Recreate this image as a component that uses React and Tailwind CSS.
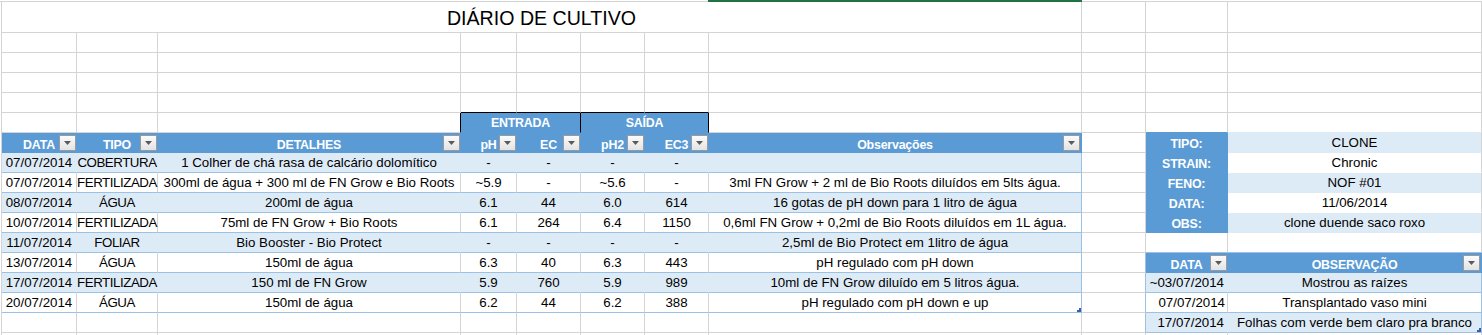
import React from "react";

const GRID =
  "grid grid-cols-[75px_81px_303px_56px_64px_64px_64px_373px_64px_82px_254px] grid-rows-[31px_repeat(16,20px)]";

const EMPTY = "border-r border-b border-[#d4d4d4] bg-white";
const TXT = "flex items-center justify-center pt-[1px] whitespace-nowrap text-black";
const HEAD =
  "relative flex items-end justify-center pb-[1px] whitespace-nowrap bg-[#5b9bd5] text-white font-bold text-[12.4px] tracking-[-0.2px] border-r border-b border-[#5b9bd5]";

function Arrow() {
  return (
    <svg width="7" height="4" viewBox="0 0 7 4">
      <path d="M0 0H7L3.5 4Z" fill="#5a5a5a" />
    </svg>
  );
}

function Filter({ inset }) {
  return (
    <span
      className={`absolute ${inset ? "right-px" : "right-0"} top-[2px] w-[17px] h-[16px] border border-[#9a9a9a] bg-linear-to-b from-[#fbfbfb] to-[#e3e3e3] flex items-center justify-center`}
    >
      <Arrow />
    </span>
  );
}

function Handle() {
  return (
    <svg
      className="absolute right-0 bottom-0"
      width="4"
      height="4"
      viewBox="0 0 4 4"
    >
      <path d="M4 0V4H0V2H2V0Z" fill="#3c5ea8" />
    </svg>
  );
}

const rows = [
  ["07/07/2014", "COBERTURA", "1 Colher de chá rasa de calcário dolomítico", "-", "-", "-", "-", ""],
  ["07/07/2014", "FERTILIZADA", "300ml de água + 300 ml de FN Grow e Bio Roots", "~5.9", "-", "~5.6", "-", "3ml FN Grow + 2 ml de Bio Roots diluídos em 5lts água."],
  ["08/07/2014", "ÁGUA", "200ml de água", "6.1", "44", "6.0", "614", "16 gotas de pH down para 1 litro de água"],
  ["10/07/2014", "FERTILIZADA", "75ml de FN Grow + Bio Roots", "6.1", "264", "6.4", "1150", "0,6ml FN Grow + 0,2ml de Bio Roots diluídos em 1L água."],
  ["11/07/2014", "FOLIAR", "Bio Booster - Bio Protect", "-", "-", "-", "-", "2,5ml de Bio Protect em 1litro de água"],
  ["13/07/2014", "ÁGUA", "150ml de água", "6.3", "40", "6.3", "443", "pH regulado com pH down"],
  ["17/07/2014", "FERTILIZADA", "150 ml de FN Grow", "5.9", "760", "5.9", "989", "10ml de FN Grow diluído em 5 litros água."],
  ["20/07/2014", "ÁGUA", "150ml de água", "6.2", "44", "6.2", "388", "pH regulado com pH down e up"],
];

const info = [
  ["TIPO:", "CLONE"],
  ["STRAIN:", "Chronic"],
  ["FENO:", "NOF #01"],
  ["DATA:", "11/06/2014"],
  ["OBS:", "clone duende saco roxo"],
];

const notes = [
  ["~03/07/2014", "Mostrou as raízes"],
  ["07/07/2014", "Transplantado vaso mini"],
  ["17/07/2014", "Folhas com verde bem claro pra branco"],
];

function DataRow({ r, i }) {
  const band = i % 2 === 0;
  const last = i === rows.length - 1;
  const cellCls = band
    ? `${TXT} bg-[#ddebf7] border-r border-b border-r-[#ddebf7] border-b-[#9bc2e6]`
    : `${TXT} bg-white border-r border-b border-r-[#d4d4d4] border-b-[#9bc2e6]`;
  const obsCls = band
    ? `${TXT} relative bg-[#ddebf7] border-r border-b border-[#9bc2e6]`
    : `${TXT} relative bg-white border-r border-b border-[#9bc2e6]`;
  return (
    <>
      {r.slice(0, 7).map((v, k) => (
        <div
          key={k}
          className={k === 1 ? `${cellCls} tracking-[-0.45px]` : cellCls}
        >
          {v}
        </div>
      ))}
      <div className={obsCls}>
        {r[7]}
        {last && <Handle />}
      </div>
    </>
  );
}

function RightSide({ idx }) {
  const colI =
    idx >= 6 && idx <= 9
      ? "border-r border-b border-r-[#9bc2e6] border-b-[#d4d4d4] bg-white"
      : EMPTY;
  let j, k;
  if (idx < 5) {
    const light = idx % 2 === 0;
    j = (
      <div className="flex items-center justify-center pt-[3px] whitespace-nowrap bg-[#5b9bd5] text-white font-bold text-[12.4px] tracking-[-0.2px] border-r border-b border-[#5b9bd5]">
        {info[idx][0]}
      </div>
    );
    k = (
      <div
        className={
          light
            ? `${TXT} bg-[#ddebf7] border-r border-b border-r-[#d4d4d4] border-b-[#ddebf7]`
            : `${TXT} bg-white border-r border-b border-r-[#d4d4d4] border-b-white`
        }
      >
        {info[idx][1]}
      </div>
    );
  } else if (idx === 5) {
    j = <div className="border-r border-b border-r-[#d4d4d4] border-b-[#9bc2e6] bg-white" />;
    k = <div className="border-r border-b border-r-[#d4d4d4] border-b-[#9bc2e6] bg-white" />;
  } else if (idx === 6) {
    j = (
      <div className={HEAD}>
        DATA
        <Filter />
      </div>
    );
    k = (
      <div className={HEAD}>
        OBSERVAÇÃO
        <Filter inset />
      </div>
    );
  } else {
    const n = idx - 7;
    const light = n % 2 === 0;
    j = (
      <div
        className={
          light
            ? "flex items-center justify-end pt-[1px] pr-[3px] whitespace-nowrap text-black bg-[#ddebf7] border-r border-b border-r-[#ddebf7] border-b-[#9bc2e6]"
            : "flex items-center justify-end pt-[1px] pr-[2px] whitespace-nowrap text-black bg-white border-r border-b border-r-[#d4d4d4] border-b-[#9bc2e6]"
        }
      >
        {notes[n][0]}
      </div>
    );
    k = (
      <div
        className={
          light
            ? `${TXT} relative bg-[#ddebf7] border-r border-b border-[#9bc2e6]`
            : `${TXT} relative bg-white border-r border-b border-[#9bc2e6]`
        }
      >
        {notes[n][1]}
        {n === 2 && <Handle />}
      </div>
    );
  }
  return (
    <>
      <div className={colI} />
      {j}
      {k}
    </>
  );
}

export default function App() {
  return (
    <div className="w-[1482px] h-[335px] overflow-hidden bg-white [font-family:'Liberation_Sans',Arial,sans-serif] text-[13.3px] leading-none">
      <div className="flex h-[2px]">
        <div className="w-[708px] h-[2px] border-b border-[#d4d4d4]" />
        <div className="w-[374px] h-[2px] bg-[#217346]" />
        <div className="flex-1 h-[2px] border-b border-[#d4d4d4]" />
      </div>
      <div className={`ml-px border-l border-[#d4d4d4] ${GRID}`}>
        {/* Row 1: title */}
        <div className="col-span-8 flex items-end justify-center pb-[3px] border-r border-b border-[#d4d4d4] text-[19.6px] text-black">
          DIÁRIO DE CULTIVO
        </div>
        <div className={EMPTY} />
        <div className={EMPTY} />
        <div className={EMPTY} />

        {/* Rows 2-4 */}
        {Array.from({ length: 33 }).map((_, i) => (
          <div key={`e${i}`} className={EMPTY} />
        ))}

        {/* Row 5 */}
        <div className={EMPTY} />
        <div className={EMPTY} />
        <div className={EMPTY} />
        <div className="border-r border-b border-r-[#d4d4d4] border-b-black bg-white" />
        <div className="border-r border-b border-r-[#d4d4d4] border-b-black bg-white" />
        <div className="border-r border-b border-r-[#d4d4d4] border-b-black bg-white" />
        <div className="border-r border-b border-r-[#d4d4d4] border-b-black bg-white" />
        <div className={EMPTY} />
        <div className={EMPTY} />
        <div className={EMPTY} />
        <div className={EMPTY} />

        {/* Row 6 */}
        <div className={EMPTY} />
        <div className={EMPTY} />
        <div className="border-r border-b border-r-black border-b-[#d4d4d4] bg-white" />
        <div className="col-span-2 flex items-center justify-center pt-[2px] bg-[#5b9bd5] text-white font-bold text-[12.4px] tracking-[-0.2px] border-r border-b border-r-black border-b-[#5b9bd5]">
          ENTRADA
        </div>
        <div className="col-span-2 flex items-center justify-center pt-[2px] bg-[#5b9bd5] text-white font-bold text-[12.4px] tracking-[-0.2px] border-r border-b border-r-black border-b-[#5b9bd5]">
          SAÍDA
        </div>
        <div className={EMPTY} />
        <div className={EMPTY} />
        <div className="border-r border-b border-r-[#d4d4d4] border-b-[#5b9bd5] bg-white" />
        <div className="border-r border-b border-r-[#d4d4d4] border-b-[#ddebf7] bg-white" />

        {/* Row 7: headers */}
        <div className={HEAD}>
          DATA
          <Filter />
        </div>
        <div className={HEAD}>
          TIPO
          <Filter />
        </div>
        <div className={HEAD}>
          DETALHES
          <Filter />
        </div>
        <div className={HEAD}>
          pH
          <Filter />
        </div>
        <div className={HEAD}>
          EC
          <Filter />
        </div>
        <div className={HEAD}>
          pH2
          <Filter />
        </div>
        <div className={HEAD}>
          EC3
          <Filter />
        </div>
        <div className={HEAD}>
          Observações
          <Filter inset />
        </div>
        <RightSide idx={0} />

        {/* Rows 8-15 */}
        {rows.map((r, i) => (
          <React.Fragment key={`r${i}`}>
            <DataRow r={r} i={i} />
            <RightSide idx={i + 1} />
          </React.Fragment>
        ))}

        {/* Row 16 */}
        {Array.from({ length: 8 }).map((_, i) => (
          <div key={`f${i}`} className={EMPTY} />
        ))}
        <RightSide idx={9} />

        {/* Row 17 */}
        {Array.from({ length: 11 }).map((_, i) => (
          <div key={`g${i}`} className={EMPTY} />
        ))}
      </div>
    </div>
  );
}
